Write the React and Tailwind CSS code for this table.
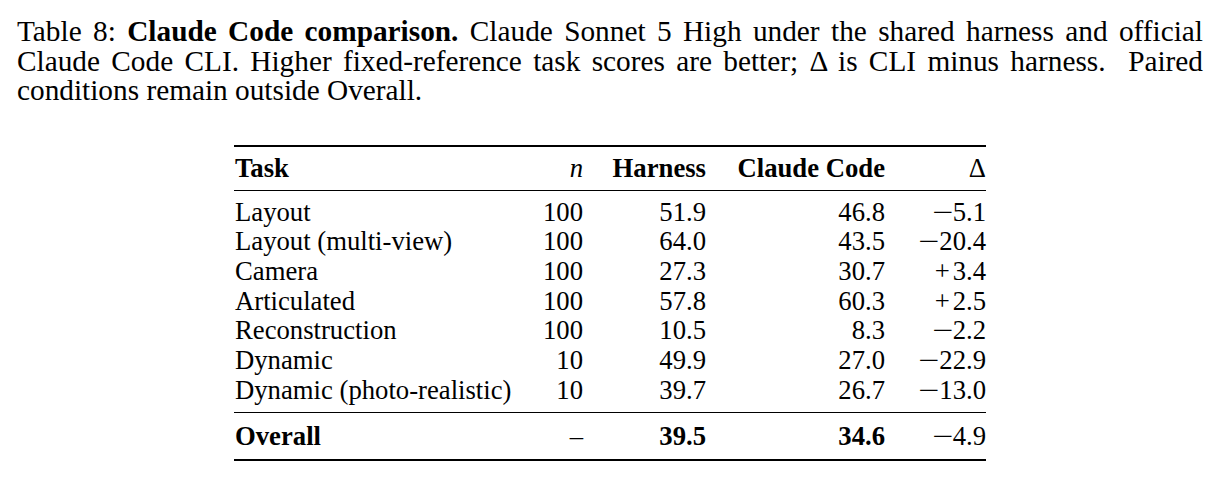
function Num({ v }) {
  const sign = v[0] === "\u2212" || v[0] === "+" ? v[0] : null;
  const rest = sign ? v.slice(1) : v;
  return (
    <span>
      {sign && (
        <span className="inline-block w-[0.78em] text-center">
          <span className={sign === "+" ? "inline-block" : "inline-block scale-x-[1.4]"}>{sign}</span>
        </span>
      )}
      {rest}
    </span>
  );
}

export default function App() {
  const rows = [
    ["Layout", "100", "51.9", "46.8", "\u22125.1"],
    ["Layout (multi-view)", "100", "64.0", "43.5", "\u221220.4"],
    ["Camera", "100", "27.3", "30.7", "+3.4"],
    ["Articulated", "100", "57.8", "60.3", "+2.5"],
    ["Reconstruction", "100", "10.5", "8.3", "\u22122.2"],
    ["Dynamic", "10", "49.9", "27.0", "\u221222.9"],
    ["Dynamic (photo-realistic)", "10", "39.7", "26.7", "\u221213.0"],
  ];
  const grid = "grid grid-cols-[286px_63px_123px_179px_101px]";
  return (
    <div className="w-[1220px] h-[479px] bg-white text-black font-['Liberation_Serif',serif] overflow-hidden">
      <div className="ml-[17px] pt-[17px] w-[1186px] text-[29.3px] leading-[29.5px]">
        <div className="text-justify [text-align-last:justify] whitespace-nowrap">
          Table 8: <span className="font-bold">Claude Code comparison.</span> Claude Sonnet 5 High under the shared harness and official
        </div>
        <div className="text-justify [text-align-last:justify]">
          Claude Code CLI. Higher fixed-reference task scores are better; Δ is CLI minus harness.&nbsp; Paired
        </div>
        <div>conditions remain outside Overall.</div>
      </div>
      <div className="ml-[234px] mt-[39px] w-[752px] text-[26.7px]">
        <div className="h-[2px] bg-black" />
        <div className={`${grid} h-[43px] items-center font-bold leading-[38px]`}>
          <div className="pl-px">Task</div>
          <div className="text-right font-normal italic">n</div>
          <div className="text-right">Harness</div>
          <div className="text-right">Claude Code</div>
          <div className="text-right font-normal">Δ</div>
        </div>
        <div className="h-px bg-black" />
        <div className="py-[7px]">
          {rows.map((r) => (
            <div key={r[0]} className={`${grid} h-[29.7px] leading-[29.7px]`}>
              <div className="pl-px whitespace-nowrap">{r[0]}</div>
              <div className="text-right">{r[1]}</div>
              <div className="text-right">{r[2]}</div>
              <div className="text-right">{r[3]}</div>
              <div className="text-right"><Num v={r[4]} /></div>
            </div>
          ))}
        </div>
        <div className="h-px bg-black" />
        <div className={`${grid} h-[46px] items-center leading-[36px]`}>
          <div className="pl-px font-bold">Overall</div>
          <div className="text-right">–</div>
          <div className="text-right font-bold">39.5</div>
          <div className="text-right font-bold">34.6</div>
          <div className="text-right"><Num v={"\u22124.9"} /></div>
        </div>
        <div className="h-[2px] bg-black" />
      </div>
    </div>
  );
}
